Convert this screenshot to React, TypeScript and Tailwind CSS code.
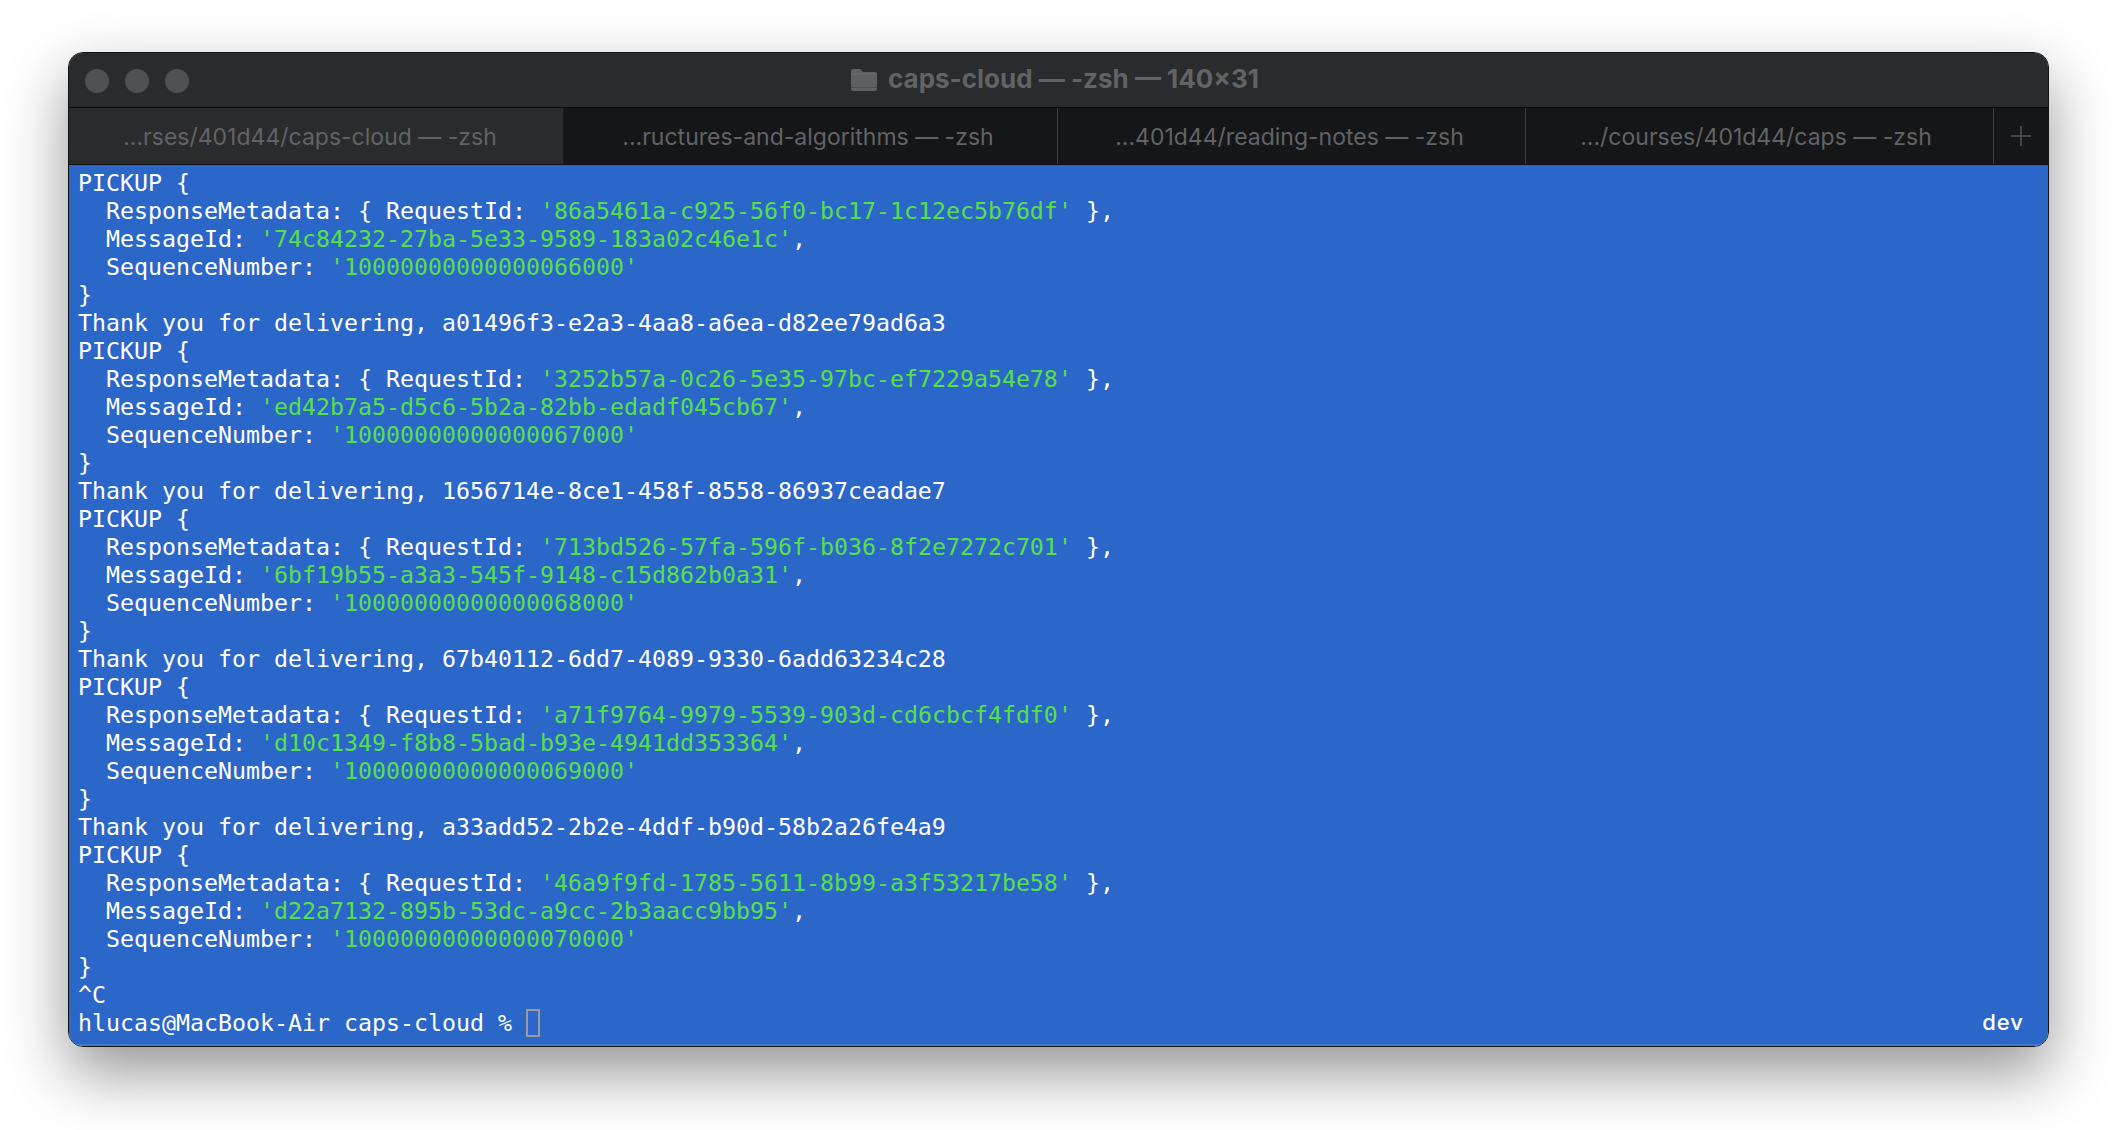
import React from 'react';

const tabs = [
  { label: '...rses/401d44/caps-cloud — -zsh', width: 'w-[495px] pr-[12px]', active: true },
  { label: '...ructures-and-algorithms — -zsh', width: 'w-[494px] pr-[5px]', active: false },
  { label: '...401d44/reading-notes — -zsh', width: 'w-[468px] pr-[4px]', active: false },
  { label: '.../courses/401d44/caps — -zsh', width: 'w-[468px] pr-[7px]', active: false },
];

const blocks = [
  { req: '86a5461a-c925-56f0-bc17-1c12ec5b76df', msg: '74c84232-27ba-5e33-9589-183a02c46e1c', seq: '10000000000000066000', done: 'a01496f3-e2a3-4aa8-a6ea-d82ee79ad6a3' },
  { req: '3252b57a-0c26-5e35-97bc-ef7229a54e78', msg: 'ed42b7a5-d5c6-5b2a-82bb-edadf045cb67', seq: '10000000000000067000', done: '1656714e-8ce1-458f-8558-86937ceadae7' },
  { req: '713bd526-57fa-596f-b036-8f2e7272c701', msg: '6bf19b55-a3a3-545f-9148-c15d862b0a31', seq: '10000000000000068000', done: '67b40112-6dd7-4089-9330-6add63234c28' },
  { req: 'a71f9764-9979-5539-903d-cd6cbcf4fdf0', msg: 'd10c1349-f8b8-5bad-b93e-4941dd353364', seq: '10000000000000069000', done: 'a33add52-2b2e-4ddf-b90d-58b2a26fe4a9' },
  { req: '46a9f9fd-1785-5611-8b99-a3f53217be58', msg: 'd22a7132-895b-53dc-a9cc-2b3aacc9bb95', seq: '10000000000000070000', done: '' },
];

const Str = ({ children }: { children: React.ReactNode }) => <span className="text-[#58e04a]">{children}</span>;

const Line = ({ children }: { children: React.ReactNode }) => (
  <div className="h-[28px] leading-[28px] whitespace-pre">{children}</div>
);

const FolderIcon = () => (
  <svg width="28" height="26" viewBox="0 0 28 26" className="mr-[10px]">
    <path d="M1 5a2 2 0 0 1 2-2h7l3 3h12a2 2 0 0 1 2 2v15a2 2 0 0 1-2 2H3a2 2 0 0 1-2-2z" fill="#5f6062" />
    <path d="M1 8h26" stroke="#6c6d6f" strokeWidth="1" />
    <path d="M1 21.5h26" stroke="#4c4d4f" strokeWidth="1" />
  </svg>
);

export default function App() {
  return (
    <div className="w-[2116px] h-[1130px] overflow-hidden bg-white pl-[68px] pt-[52px]">
      <div className="w-[1981px] h-[995px] flex flex-col rounded-[15px] overflow-hidden border border-[#111214] shadow-[0_26px_62px_rgba(0,0,0,0.42)]">
        <div className="h-[55px] shrink-0 bg-[#2a2b2d] border-b border-[#0b0b0c] relative flex items-center justify-center pr-[8px] pb-[3px] font-['Inter',sans-serif] font-bold text-[26px] text-[#626365]">
          <div className="absolute left-[16px] top-[16px] flex gap-[16px]">
            <div className="w-[24px] h-[24px] rounded-full bg-[#505153]" />
            <div className="w-[24px] h-[24px] rounded-full bg-[#505153]" />
            <div className="w-[24px] h-[24px] rounded-full bg-[#505153]" />
          </div>
          <FolderIcon />
          <span>caps-cloud — -zsh — 140×31</span>
        </div>
        <div className="h-[57px] shrink-0 flex bg-[#151618] border-b border-[#0b0b0c] font-['Inter',sans-serif] text-[23px] text-[#626365]">
          {tabs.map(t => (
            <div
              key={t.label}
              className={`${t.width} shrink-0 pt-[2px] flex items-center justify-center border-r border-[#3a3b3d] ${t.active ? 'bg-[#2a2b2d] border-r-[#1a1b1d]' : ''}`}
            >
              {t.label}
            </div>
          ))}
          <div className="flex-1 flex items-center justify-center pr-[1px]">
            <svg width="20" height="20" viewBox="0 0 20 20">
              <path d="M10 0v20M0 10h20" stroke="#55565a" strokeWidth="1.5" />
            </svg>
          </div>
        </div>
        <div className="flex-1 relative bg-[#2b66c9] pt-[4px] pl-[9px] font-['DejaVu_Sans_Mono',monospace] text-[23.25px] text-white shadow-[inset_0_-2px_0_rgba(255,255,255,0.12)]">
          {blocks.map(b => (
            <div key={b.req}>
              <Line>PICKUP {'{'}</Line>
              <Line>  ResponseMetadata: {'{'} RequestId: <Str>'{b.req}'</Str> {'}'},</Line>
              <Line>  MessageId: <Str>'{b.msg}'</Str>,</Line>
              <Line>  SequenceNumber: <Str>'{b.seq}'</Str></Line>
              <Line>{'}'}</Line>
              {b.done && <Line>Thank you for delivering, {b.done}</Line>}
            </div>
          ))}
          <Line>^C</Line>
          <Line>
            hlucas@MacBook-Air caps-cloud % <span className="inline-block w-[14px] h-[28px] align-top border-2 border-[#9a9ba0]" />
          </Line>
          <div className="absolute right-[24px] bottom-[10px] font-['Inter',sans-serif] font-medium text-[22px] tracking-[1px] leading-[28px]">dev</div>
        </div>
      </div>
    </div>
  );
}
